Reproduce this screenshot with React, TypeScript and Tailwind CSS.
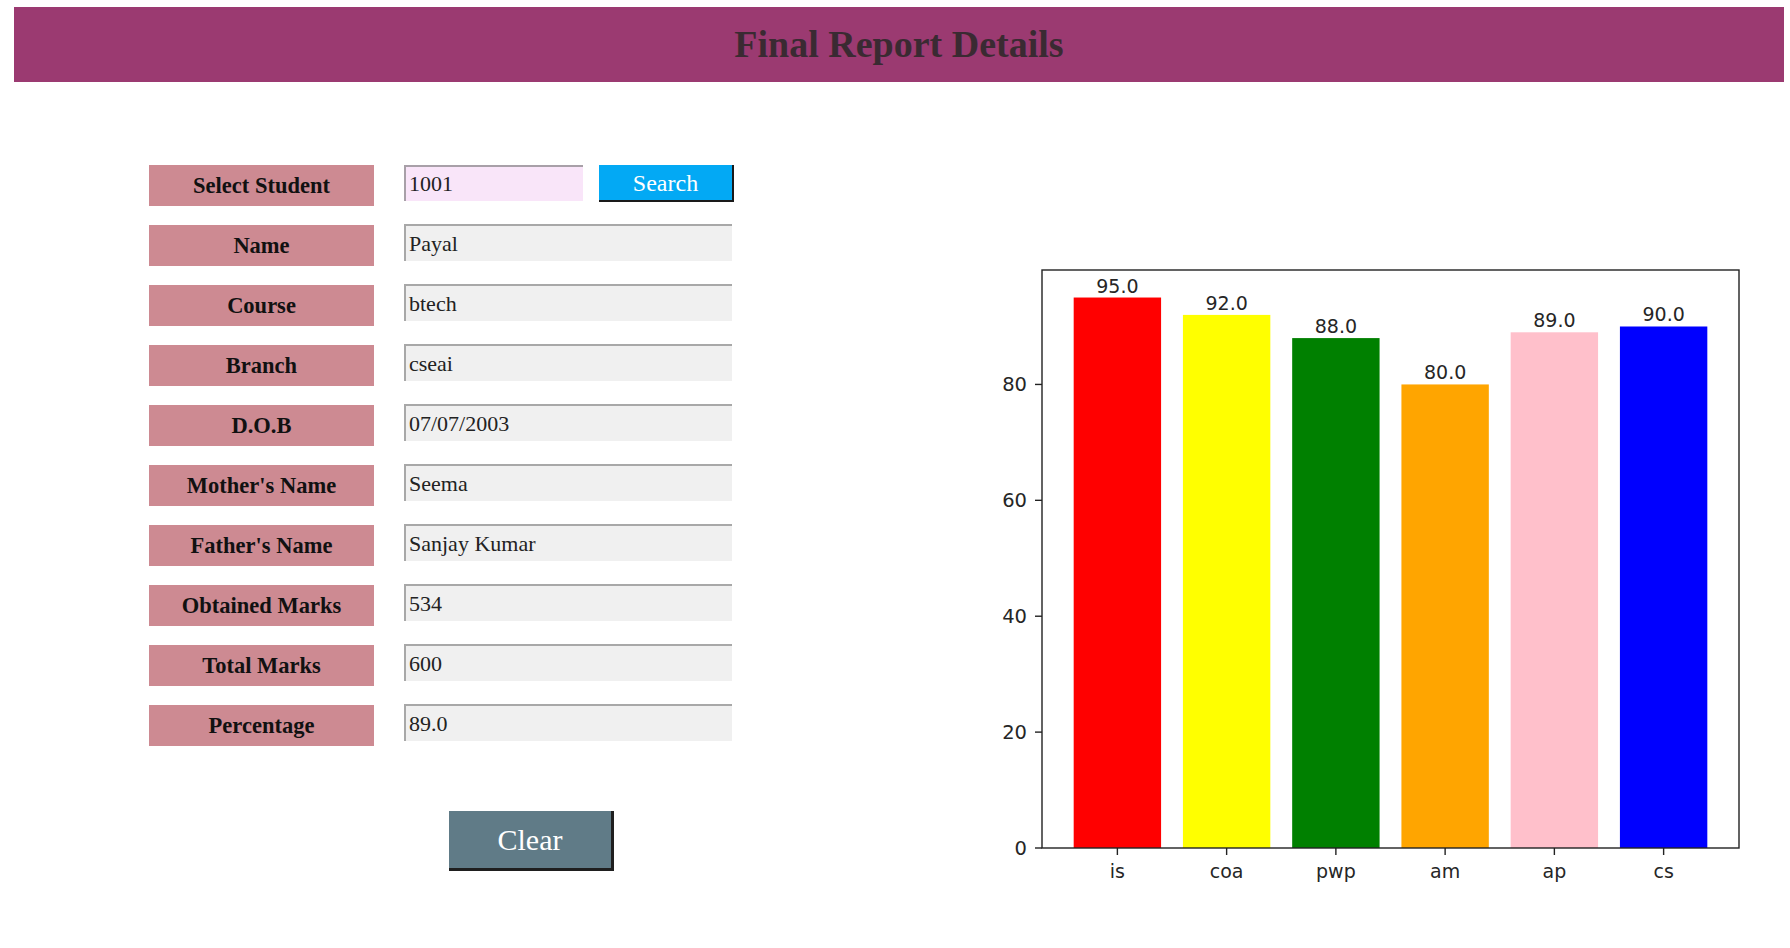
import React from 'react';

const fields: { label: string; value: string }[] = [
  { label: 'Name', value: 'Payal' },
  { label: 'Course', value: 'btech' },
  { label: 'Branch', value: 'cseai' },
  { label: 'D.O.B', value: '07/07/2003' },
  { label: "Mother's Name", value: 'Seema' },
  { label: "Father's Name", value: 'Sanjay Kumar' },
  { label: 'Obtained Marks', value: '534' },
  { label: 'Total Marks', value: '600' },
  { label: 'Percentage', value: '89.0' },
];

const marks = [
  { subject: 'is', value: 95, color: '#ff0000' },
  { subject: 'coa', value: 92, color: '#ffff00' },
  { subject: 'pwp', value: 88, color: '#008000' },
  { subject: 'am', value: 80, color: '#ffa500' },
  { subject: 'ap', value: 89, color: '#ffc0cb' },
  { subject: 'cs', value: 90, color: '#0000ff' },
];

function Label({ children }: { children: React.ReactNode }) {
  return (
    <div className="w-[225px] h-[41px] shrink-0 bg-[#cd8a92] flex items-center justify-center text-[22.5px] font-bold text-[#111] font-['Liberation_Serif',serif]">
      {children}
    </div>
  );
}

function MarksChart() {
  // axes box in svg coords
  const ax = { left: 82, top: 20, right: 779, bottom: 598 };
  const yMax = 99.75;
  const py = (ax.bottom - ax.top) / yMax;
  const xMin = -0.69;
  const px = (ax.right - ax.left) / 6.38;
  const sx = (v: number) => ax.left + (v - xMin) * px;
  const sy = (v: number) => ax.bottom - v * py;

  return (
    <svg width="800" height="650" viewBox="0 0 800 650" className="block">
      {marks.map((m, i) => (
        <g key={m.subject}>
          <rect x={sx(i - 0.4)} y={sy(m.value)} width={0.8 * px} height={m.value * py} fill={m.color} />
          <text
            x={sx(i)}
            y={sy(m.value) - 5}
            textAnchor="middle"
            fontSize="19"
            fill="#262626"
            fontFamily="'DejaVu Sans', sans-serif"
          >
            {m.value.toFixed(1)}
          </text>
          <line x1={sx(i)} x2={sx(i)} y1={ax.bottom} y2={ax.bottom + 7} stroke="#222" strokeWidth="1.4" />
          <text
            x={sx(i)}
            y={ax.bottom + 30}
            textAnchor="middle"
            fontSize="19"
            fill="#262626"
            fontFamily="'DejaVu Sans', sans-serif"
          >
            {m.subject}
          </text>
        </g>
      ))}
      {[0, 20, 40, 60, 80].map((t) => (
        <g key={t}>
          <line x1={ax.left - 7} x2={ax.left} y1={sy(t)} y2={sy(t)} stroke="#222" strokeWidth="1.4" />
          <text
            x={ax.left - 15}
            y={sy(t) + 7}
            textAnchor="end"
            fontSize="19.5"
            fill="#262626"
            fontFamily="'DejaVu Sans', sans-serif"
          >
            {t}
          </text>
        </g>
      ))}
      <rect
        x={ax.left}
        y={ax.top}
        width={ax.right - ax.left}
        height={ax.bottom - ax.top}
        fill="none"
        stroke="#222"
        strokeWidth="1.4"
      />
    </svg>
  );
}

export default function App() {
  return (
    <div className="min-h-screen w-full bg-white font-['Liberation_Serif',serif]">
      <div className="pt-[7px] pl-[14px] pr-[6px]">
        <header className="h-[75px] bg-[#9b3a71] flex items-center justify-center">
          <h1 className="text-[38px] font-bold text-[#3a2a32]">Final Report Details</h1>
        </header>
      </div>

      <div className="flex">
        <div className="ml-[149px] mt-[83px] flex flex-col gap-[19px]">
          <div className="flex items-start">
            <Label>Select Student</Label>
            <input
              defaultValue="1001"
              className="ml-[30px] w-[179px] h-[36px] bg-[#f9e5f9] border-t-2 border-l-2 border-[#a8a0a8] pl-[3px] text-[22px] text-[#222] outline-none font-['Liberation_Serif',serif]"
            />
            <button className="ml-[16px] w-[135px] h-[37px] bg-[#03a9f4] border-r-2 border-b-2 border-[#1a1a1a] text-white text-[24px] font-['Liberation_Serif',serif]">
              Search
            </button>
          </div>
          {fields.map((f) => (
            <div key={f.label} className="flex items-start">
              <Label>{f.label}</Label>
              <div className="ml-[30px] -mt-px w-[328px] h-[37px] bg-[#f0f0f0] border-t-2 border-l-2 border-[#a8a8a8] pl-[3px] flex items-center text-[22px] text-[#222]">
                {f.value}
              </div>
            </div>
          ))}
          <div className="mt-[46px] ml-[300px]">
            <button className="w-[165px] h-[60px] bg-[#607b87] border-r-[3px] border-b-[3px] border-[#1f1f1f] text-white text-[30px] font-['Liberation_Serif',serif]">
              Clear
            </button>
          </div>
        </div>

        <div className="ml-[226px] mt-[168px]">
          <MarksChart />
        </div>
      </div>
    </div>
  );
}
